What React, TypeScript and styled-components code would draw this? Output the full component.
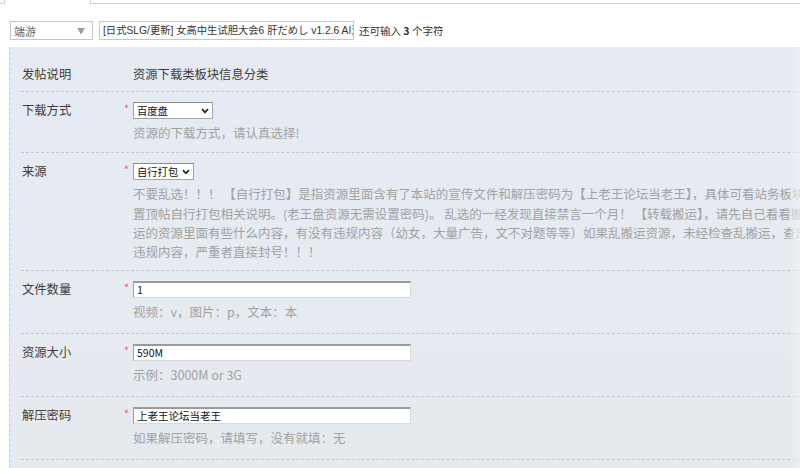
import React from "react";
import styled, { createGlobalStyle } from "styled-components";

const GlobalStyle = createGlobalStyle`
  html, body { margin: 0; padding: 0; background: #ffffff; overflow: hidden; }
  body { font-family: "Noto Sans CJK SC", "Noto Sans", sans-serif; }
  * { box-sizing: border-box; }
`;

const Page = styled.div`
  position: relative;
  width: 800px;
  height: 468px;
  overflow: hidden;
  background: #ffffff;
`;

const TopStrip = styled.div`
  display: flex;
  height: 4px;
`;

const StubLeft = styled.div`
  width: 5px;
  height: 4px;
  border-right: 1px solid #cfcfcf;
  border-bottom: 1px solid #cfcfcf;
`;

const StubWide = styled.div`
  flex: 1;
  margin-left: 85px;
  height: 4px;
  border-left: 1px solid #cfcfcf;
  border-bottom: 1px solid #cfcfcf;
`;

const TitleBar = styled.div`
  display: flex;
  align-items: center;
  padding: 17px 0 0 10px;
  height: 36px;
`;

const TypeSelect = styled.div`
  flex-shrink: 0;
  display: flex;
  align-items: center;
  justify-content: space-between;
  width: 83px;
  height: 19px;
  padding: 0 7px 0 3px;
  border: 1px solid #c6c6c6;
  color: #666;
  font-size: 11px;
`;

const Caret = styled.span`
  color: #9a9a9a;
  font-size: 8px;
`;

const TitleInput = styled.div`
  flex-shrink: 0;
  width: 255px;
  height: 19px;
  margin-left: 6px;
  padding: 0 0 0 3px;
  border: 1px solid #c6c6c6;
  color: #333;
  font-family: "Liberation Sans", "Noto Sans CJK SC", sans-serif;
  font-size: 10.3px;
  line-height: 17px;
  white-space: nowrap;
  overflow: hidden;
`;

const Counter = styled.div`
  flex-shrink: 0;
  margin-left: 5px;
  font-size: 10.5px;
  color: #333;
  white-space: nowrap;
  b { font-weight: 700; }
`;

const Panel = styled.div`
  margin: 7px 0 0 9px;
  border-left: 1px dashed #c8ccd3;
  background: linear-gradient(to bottom, #e3ecec 0px, #e6eaf2 6px, #e6eaf1 60%, #e5eaee 100%);
  padding-left: 11px;
  height: 430px;
`;

const Row = styled.div<{ $header?: boolean; $pb?: number }>`
  display: grid;
  grid-template-columns: 102px 10px 1fr;
  align-items: start;
  padding: ${(p) => (p.$header ? "20px 0 10px" : `10px 0 ${p.$pb ?? 11.5}px`)};
  border-bottom: 1px dashed #c3c8ce;
  font-size: 12.3px;
  line-height: 17px;
`;

const Label = styled.div<{ $lh?: number }>`
  grid-column: 1;
  padding-left: 1px;
  color: #3d3d3d;
  line-height: ${(p) => p.$lh ?? 17}px;
  height: ${(p) => p.$lh ?? 17}px;
`;

const Star = styled.div`
  grid-column: 2;
  color: #ef5a5a;
  font-size: 10.5px;
  line-height: 13px;
  height: 13px;
  padding-left: 1px;
`;

const HeaderValue = styled.div`
  grid-column: 3;
  color: #3d3d3d;
  line-height: 14px;
`;

const SelectBox = styled.div<{ $w: number }>`
  grid-column: 3;
  display: flex;
  align-items: center;
  justify-content: space-between;
  gap: 4px;
  width: ${(p) => p.$w}px;
  height: 17px;
  padding: 0 3px 0 3px;
  background: #fff;
  border: 1px solid #a4a4a4;
  border-top-color: #8a8a8a;
  color: #111;
  font-size: 10.3px;
  line-height: 15px;
  white-space: nowrap;
`;

const TextField = styled.div`
  grid-column: 3;
  width: 278px;
  height: 17px;
  padding: 0 3px;
  background: #fff;
  border: 1px solid #d9d9d9;
  border-top: 2px solid #9a9a9a;
  border-left-color: #a0a0a0;
  color: #111;
  font-size: 10.5px;
  line-height: 14px;
  white-space: nowrap;
`;

const Hint = styled.div`
  grid-column: 3;
  margin-top: 4px;
  color: #a2a2a2;
  font-size: 12.5px;
`;

const HintLine = styled.div`
  white-space: nowrap;
  height: 19.3px;
  line-height: 19.3px;
`;

const EdgeShade = styled.div`
  position: absolute;
  top: 47px;
  right: 0;
  bottom: 0;
  width: 10px;
  background: linear-gradient(to right, rgba(230, 232, 236, 0.5), rgba(240, 242, 244, 0.7));
`;

const Chevron = () => (
  <svg width="8" height="6" viewBox="0 0 8 6">
    <polyline points="1,1 4,4.3 7,1" fill="none" stroke="#222" strokeWidth="1.8" />
  </svg>
);

const sourceHint = [
  "不要乱选！！！  【自行打包】是指资源里面含有了本站的宣传文件和解压密码为【上老王论坛当老王】，具体可看站务板块的",
  "置顶帖自行打包相关说明。(老王盘资源无需设置密码)。 乱选的一经发现直接禁言一个月！ 【转载搬运】，请先自己看看搬运",
  "运的资源里面有些什么内容，有没有违规内容（幼女，大量广告，文不对题等等）如果乱搬运资源，未经检查乱搬运，查出有",
  "违规内容，严重者直接封号！！！",
];

export default function App() {
  return (
    <>
      <GlobalStyle />
      <Page>
        <TopStrip>
          <StubLeft />
          <StubWide />
        </TopStrip>
        <TitleBar>
          <TypeSelect>
            <span>端游</span>
            <Caret>▼</Caret>
          </TypeSelect>
          <TitleInput>[日式SLG/更新] 女高中生试胆大会6 肝だめし v1.2.6 AI汉化</TitleInput>
          <Counter>
            还可输入 <b>3</b> 个字符
          </Counter>
        </TitleBar>
        <Panel>
          <Row $header>
            <Label $lh={14}>发帖说明</Label>
            <HeaderValue>资源下载类板块信息分类</HeaderValue>
          </Row>
          <Row $pb={10}>
            <Label>下载方式</Label>
            <Star>*</Star>
            <SelectBox $w={80}>
              <span>百度盘</span>
              <Chevron />
            </SelectBox>
            <Hint>
              <HintLine>资源的下载方式，请认真选择!</HintLine>
            </Hint>
          </Row>
          <Row $pb={9}>
            <Label>来源</Label>
            <Star>*</Star>
            <SelectBox $w={61}>
              <span>自行打包</span>
              <Chevron />
            </SelectBox>
            <Hint>
              {sourceHint.map((l, i) => (
                <HintLine key={i}>{l}</HintLine>
              ))}
            </Hint>
          </Row>
          <Row>
            <Label>文件数量</Label>
            <Star>*</Star>
            <TextField>1</TextField>
            <Hint>
              <HintLine>视频：v，图片：p，文本：本</HintLine>
            </Hint>
          </Row>
          <Row>
            <Label>资源大小</Label>
            <Star>*</Star>
            <TextField>590M</TextField>
            <Hint>
              <HintLine>示例：3000M or 3G</HintLine>
            </Hint>
          </Row>
          <Row>
            <Label>解压密码</Label>
            <Star>*</Star>
            <TextField>上老王论坛当老王</TextField>
            <Hint>
              <HintLine>如果解压密码，请填写，没有就填：无</HintLine>
            </Hint>
          </Row>
        </Panel>
        <EdgeShade />
      </Page>
    </>
  );
}
